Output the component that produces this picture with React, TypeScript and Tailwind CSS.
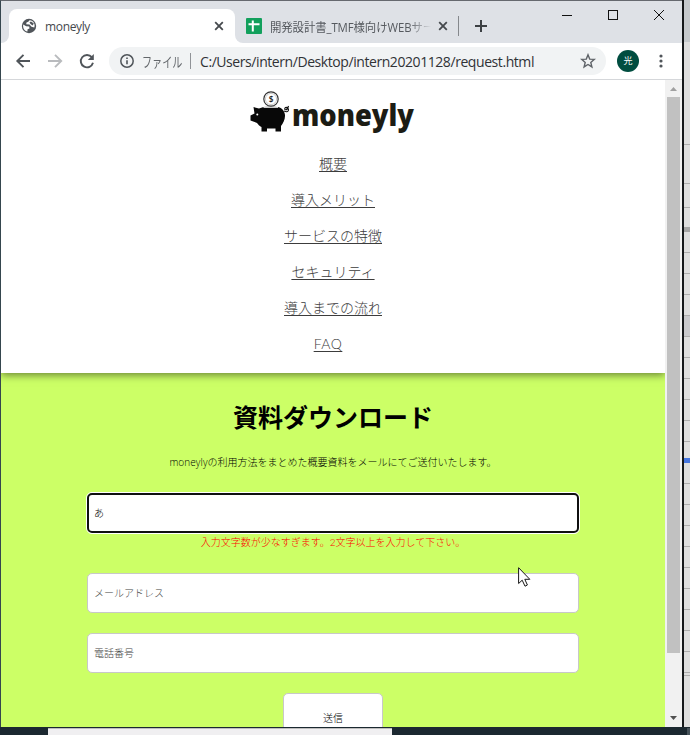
import { ReactNode } from "react";

const navItems = ["概要", "導入メリット", "サービスの特徴", "セキュリティ", "導入までの流れ"];
const gridLines = [144, 183, 207, 252, 273, 294, 315, 336, 357, 378, 399, 420, 441, 483, 504, 525, 546, 567, 588, 609, 630, 651, 672, 675];

function CloseIcon() {
  return (
    <svg width="10" height="10" viewBox="0 0 10 10" className="shrink-0">
      <path d="M1.2 1.2 8.8 8.8M8.8 1.2 1.2 8.8" stroke="#45494d" strokeWidth="1.8" />
    </svg>
  );
}

function TabStrip() {
  return (
    <div className="flex h-[42px] bg-[#dee1e6]">
      <div className="flex w-2 items-end bg-white">
        <div className="h-full w-full rounded-br-lg bg-[#dee1e6]" />
      </div>
      <div className="bg-[#dee1e6] pt-2">
        <div className="flex h-[34px] w-[226px] items-center rounded-t-lg bg-white pl-3 pr-[11px]">
          <svg width="16" height="16" viewBox="0 0 16 16" className="shrink-0">
            <circle cx="8" cy="8" r="7.2" fill="#50555a" />
            <path d="M2.2 6.6 5.200 8.200 8.200 8.400 8.500 10.400 6.600 11.200 6.400 13.600C3.500 12.900 1.700 10.500 2.200 6.600Z" fill="#fff" />
            <path d="M8.600 2.200 7.300 3.700 5.500 4.500 5.200 6.200 8.500 6.500 10.500 8.800 13.300 9.500C14.500 6.200 12.500 2.600 8.600 2.200Z" fill="#fff" />
            <path d="M8.500 4.200 10 3.600 12.800 5.600 11.700 7.600 9.500 6Z" fill="#50555a" />
          </svg>
          <span className="ml-2 mt-px flex-1 text-[12px] tracking-[-0.35px] text-[#45494d]">moneyly</span>
          <CloseIcon />
        </div>
      </div>
      <div className="w-2 bg-white">
        <div className="h-full rounded-bl-lg bg-[#dee1e6]" />
      </div>
      <div className="flex w-[215px] items-center pl-[3px] pt-2">
        <svg width="16" height="16" viewBox="0 0 16 16" className="shrink-0">
          <rect width="16" height="16" rx="1" fill="#12a05c" />
          <path d="M2.500 6.300H13.500M6.800 2.500V13.500" stroke="#fff" strokeWidth="2" />
        </svg>
        <div className="ml-2 w-[161px] [mask-image:linear-gradient(to_right,black_86%,transparent)]">
          <span className="inline-block origin-left scale-x-[0.950] whitespace-nowrap text-[12px] tracking-[-0.100px] text-[#55595e]">
            開発設計書_TMF様向けWEBサー
          </span>
        </div>
        <div className="ml-[7px] flex">
          <CloseIcon />
        </div>
        <div className="ml-[10px] h-5 w-px shrink-0 bg-[#85888c]" />
      </div>
      <svg width="12" height="12" viewBox="0 0 12 12" className="ml-[17px] mt-[19px] shrink-0">
        <path d="M6 0V12M0 6H12" stroke="#3c4043" strokeWidth="2" />
      </svg>
      <svg width="104" height="12" viewBox="0 0 104 12" className="ml-[75px] mt-[8px] shrink-0" fill="none" stroke="#111" shapeRendering="crispEdges">
        <path d="M0 6.500H10M46.500 1.500H55.500V10.500H46.500Z" />
        <path d="M92 1 102 11M102 1 92 11" shapeRendering="auto" />
      </svg>
    </div>
  );
}

function Toolbar() {
  return (
    <div className="flex h-[37px] items-center border-b border-[#d5d7da] bg-white pl-[14px]">
      <svg width="82" height="18" viewBox="0 0 82 18" className="shrink-0" fill="none" strokeWidth="1.900">
        <path d="M15 9H2.500M8.500 2.800 2.300 9 8.500 15.200" stroke="#50555a" />
        <path d="M33 9H45.500M40 2.800 46.200 9 40 15.200" stroke="#b9bbbe" />
        <path d="M76.800 5.200A6.200 6.200 0 1 0 78 10.800" stroke="#50555a" />
        <path d="M78.800 2V8H72.800Z" fill="#50555a" />
      </svg>
      <div className="ml-[12px] flex h-7 w-[497px] items-center rounded-full bg-[#f1f3f4] pl-[11px] pr-[10px]">
        <svg width="14" height="14" viewBox="0 0 14 14" className="shrink-0" fill="none" stroke="#50555a">
          <circle cx="7" cy="7" r="6.200" strokeWidth="1.500" />
          <path d="M7 6.200V10.300M7 3.500V5" strokeWidth="1.600" />
        </svg>
        <div className="ml-2 w-10">
          <span className="inline-block origin-left scale-x-[0.720] whitespace-nowrap text-[14px] text-[#63676b]">ファイル</span>
        </div>
        <div className="ml-2 h-4 w-px bg-[#909397]" />
        <span className="ml-[9px] flex-1 whitespace-nowrap text-[14px] tracking-[-0.430px] text-[#303236]">
          C:/Users/intern/Desktop/intern20201128/request.html
        </span>
        <svg width="16" height="16" viewBox="0 0 16 16" className="shrink-0" fill="none" stroke="#5f6368" strokeWidth="1.400">
          <path d="M8 1.800 9.700 6.100 14.300 6.400 10.800 9.400 11.900 13.900 8 11.500 4.100 13.900 5.200 9.400 1.700 6.400 6.300 6.100Z" />
        </svg>
      </div>
      <div className="ml-[11px] flex size-[22px] items-center justify-center rounded-full bg-[#004d40] text-[9px] text-white">光</div>
      <svg width="4" height="14" viewBox="0 0 4 14" className="ml-[20px]" fill="#50555a">
        <circle cx="2" cy="2" r="1.600" />
        <circle cx="2" cy="7" r="1.600" />
        <circle cx="2" cy="12" r="1.600" />
      </svg>
    </div>
  );
}

function Logo() {
  return (
    <svg width="170" height="50" viewBox="-1 -1 170 50" className="shrink-0 overflow-visible">
      <g fill="#080808">
        <path d="M4.500 17 10 18.500C13 17 16 16.700 20 16.700H26C32 16.700 35.500 20 36 25C36.300 29.500 34 33.500 32 36V41.500H26.500V38.500H18V41.500H12.500V37C10.500 36 9 34.500 8 33L1.500 30.500V25.500L5.500 23.500Z" />
        <path d="M35 21C41 24 40.500 16.500 36.500 17.500C34 19.500 38 22 39.500 16" fill="none" stroke="#111" strokeWidth="1.100" />
      </g>
      <circle cx="8.300" cy="24.500" r="1" fill="#fff" />
      <path d="M14.500 17.200H29" stroke="#fff" strokeWidth="1.200" />
      <circle cx="22" cy="9" r="7.200" fill="#fff" stroke="#333" strokeWidth="1.200" />
      <circle cx="22" cy="9" r="5.600" fill="none" stroke="#999" strokeWidth=".5" />
      <text x="22" y="12" textAnchor="middle" fontSize="8" fontWeight="700" fill="#222">$</text>
      <text x="43" y="35.500" textLength="122" lengthAdjust="spacingAndGlyphs" fontSize="30" fontWeight="800" fill="#1c1c14" className="font-['Open_Sans']">moneyly</text>
    </svg>
  );
}

function Field({ children }: { children: ReactNode }) {
  return (
    <div className="flex h-10 w-[492px] items-center rounded-[5px] border border-[#c8c8c8] bg-white px-[6px] text-[10px] text-[#444]">
      {children}
    </div>
  );
}

function Page() {
  return (
    <div className="flex h-full w-[664px] flex-col overflow-hidden bg-[#ccff66] font-['Lato','Noto_Sans_CJK_JP',sans-serif] font-light">
      <header className="relative flex h-[293px] shrink-0 flex-col items-center bg-white pt-[9px] shadow-[0_2px_8px_rgba(0,0,0,0.5)]">
        <Logo />
        <nav className="mt-[7px] flex flex-col items-center text-[14px] leading-5 text-[#3c3c3c] underline-offset-2">
          {navItems.map((item) => (
            <a key={item} className="flex h-9 items-center underline">{item}</a>
          ))}
          <a className="mr-[10px] flex h-9 items-center tracking-[0.500px] underline">FAQ</a>
        </nav>
      </header>
      <main className="flex flex-col items-center">
        <h1 className="mt-[26px] text-[25px] font-bold leading-9 text-black">資料ダウンロード</h1>
        <p className="mt-[19px] whitespace-nowrap text-[10px] leading-4 text-black">
          <span className="font-['Open_Sans'] tracking-[0.100px]">moneyly</span>の利用方法をまとめた概要資料をメールにてご送付いたします。
        </p>
        <div className="mt-[22px] flex h-[42px] w-[494px] items-center rounded-[6px] border border-white bg-white">
          <div className="flex h-10 w-full items-center rounded-[5px] border-2 border-[#101010] px-[5px] text-[10px] text-black">あ</div>
        </div>
        <p className="h-[39px] whitespace-nowrap text-[10px] leading-4 text-[#ff0000]">
          入力文字数が少なすぎます。2文字以上を入力して下さい。
        </p>
        <div className="flex flex-col items-center gap-5">
          <Field>メールアドレス</Field>
          <Field>電話番号</Field>
          <div className="flex h-[50px] w-[100px] items-center justify-center rounded-[5px] border border-[#c8c8c8] bg-white text-[10px] text-black">送信</div>
        </div>
      </main>
    </div>
  );
}

function Scrollbar() {
  return (
    <div className="flex h-full w-[17px] flex-col items-center bg-[#f1f1f1]">
      <svg width="17" height="17" viewBox="0 0 17 17" className="shrink-0">
        <path d="M5 11 8.500 7 12 11Z" fill="#a0a0a0" />
      </svg>
      <div className="h-[556px] w-[13px] bg-[#c1c1c1]" />
      <svg width="17" height="17" viewBox="0 0 17 17" className="mt-auto shrink-0">
        <path d="M5 6 8.500 10 12 6Z" fill="#505050" />
      </svg>
    </div>
  );
}

export default function App() {
  return (
    <div className="relative flex h-[735px] w-[690px] flex-col overflow-hidden bg-[#1b2830] font-['Open_Sans','Noto_Sans_CJK_JP',sans-serif]">
      <div className="flex h-[727px]">
        <div className="flex w-[682px] flex-col border-l border-t border-l-[#35464e] border-t-[#66696f]">
          <TabStrip />
          <Toolbar />
          <div className="flex min-h-0 flex-1">
            <Page />
            <Scrollbar />
          </div>
        </div>
        <div className="w-[2px] bg-[#15181a]" />
        <div className="relative flex-1 bg-[#dedede]">
          <div className="h-[42px] bg-[#c5c9cc]" />
          {gridLines.map((y) => (
            <div key={y} className="absolute left-0 h-px w-full bg-[#adadad]" style={{ top: y }} />
          ))}
          <div className="absolute left-0 top-[227px] h-[5px] w-full bg-[#a5a5a5]" />
          <div className="absolute left-0 top-[316px] h-[20px] w-full bg-[#c9c9cc]" />
          <div className="absolute left-0 top-[458px] h-[5px] w-full bg-[#4676df]" />
        </div>
      </div>
      <div className="flex h-2 justify-between pt-px">
        <div className="ml-12 w-[344px] border-t border-[#bdbdbd] bg-[#f0eff1]" />
        <div className="w-[3px] bg-[#46525a]" />
      </div>
      <svg width="14" height="21" viewBox="0 0 14 21" className="absolute left-[518px] top-[567px]">
        <path d="M.600.700V16.500L4.200 13.200 7 19.200 9.400 18 6.800 12.300H11.800Z" fill="#fff" stroke="#171717" />
      </svg>
    </div>
  );
}
